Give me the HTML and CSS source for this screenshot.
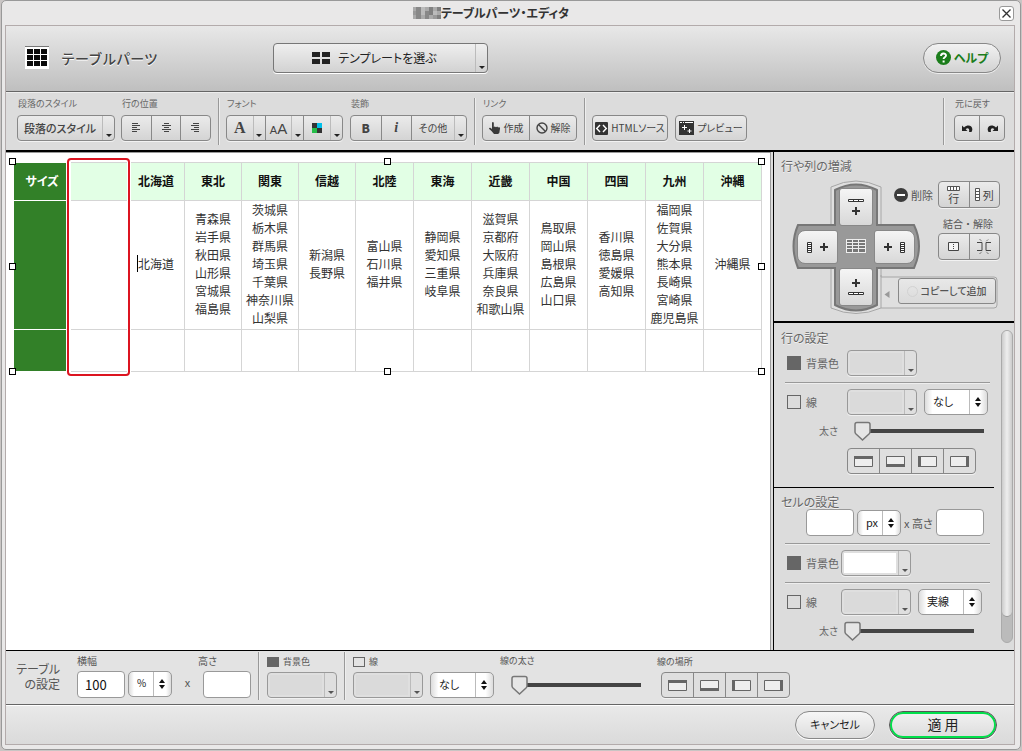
FILE: index.html
```html
<!DOCTYPE html>
<html lang="ja">
<head>
<meta charset="utf-8">
<title>テーブルパーツ・エディタ</title>
<link rel="stylesheet" href="styles.css">
</head>
<body>
<svg class="defs" aria-hidden="true">
  <defs>
    <symbol id="edge-top" viewBox="0 0 19 11"><path d="M.5.5h18v10H.5z" fill="#eee" stroke="#666"/><path d="M0 0h19v3H0z" fill="#666"/></symbol>
    <symbol id="edge-bottom" viewBox="0 0 19 11"><path d="M.5.5h18v10H.5z" fill="#eee" stroke="#666"/><path d="M0 8h19v3H0z" fill="#666"/></symbol>
    <symbol id="edge-left" viewBox="0 0 19 11"><path d="M.5.5h18v10H.5z" fill="#eee" stroke="#666"/><path d="M0 0h3v11H0z" fill="#666"/></symbol>
    <symbol id="edge-right" viewBox="0 0 19 11"><path d="M.5.5h18v10H.5z" fill="#eee" stroke="#666"/><path d="M16 0h3v11h-3z" fill="#666"/></symbol>
    <symbol id="plus" viewBox="0 0 8 8"><path d="M4 0v8M0 4h8" stroke="#333" stroke-width="2"/></symbol>
    <symbol id="strip-h" viewBox="0 0 16 3"><path d="M.5.5h15v2H.5zM5.5.5v2M10.500.5v2" fill="#fff" stroke="#333"/></symbol>
    <symbol id="strip-v" viewBox="0 0 5 11"><path d="M.5.5h4v10h-4zM.5 2.500h4M.5 4.500h4M.5 6.500h4M.5 8.500h4" fill="#fff" stroke="#333"/></symbol>
  </defs>
</svg>
<div class="window">
  <div class="titlebar">
    <svg class="mosaic" width="28" height="12" viewBox="0 0 28 12" aria-hidden="true">
      <path d="M0 0h28v12H0z" fill="#aaa"/><path d="M3 0h5v12H3zM12 4h4v8h-4z" fill="#888"/><path d="M8 0h4v8H8zM20 4h4v4h-4z" fill="#bbb"/><path d="M16 0h4v8h-4zM24 0h4v4h-4zM24 8h4v4h-4z" fill="#808080"/><path d="M0 4h3v4H0zM20 8h4v4h-4z" fill="#999"/>
    </svg>
    <h1>テーブルパーツ・エディタ</h1>
    <button class="close" aria-label="閉じる"><svg width="9" height="9" viewBox="0 0 9 9"><path d="M.5.5l8 8M8.500.5l-8 8" stroke="#333" stroke-width="1.300"/></svg></button>
  </div>
  <div class="panel">
    <header class="header">
      <div class="brand">
        <svg width="24" height="23" viewBox="0 0 24 23" aria-hidden="true"><path d="M0 0h24v23H0z" fill="#fff"/><path d="M0 .5h24" stroke="#777"/><path d="M2 3h6v5H2zM9 3h6v5H9zM16 3h6v5h-6zM2 9h6v5H2zM9 9h6v5H9zM16 9h6v5h-6zM2 15h6v5H2zM9 15h6v5H9zM16 15h6v5h-6z" fill="#0a0a0a"/></svg>
        <h2>テーブルパーツ</h2>
      </div>
      <button class="template">
        <span class="template-face"><svg width="18" height="12" viewBox="0 0 18 12" aria-hidden="true"><path d="M0 0h8v5H0zM10 0h8v5h-8zM0 7h8v5H0zM10 7h8v5h-8z" fill="#222"/></svg>テンプレートを選ぶ</span>
        <span class="caret"></span>
      </button>
      <button class="help"><svg width="15" height="15" viewBox="0 0 15 15" aria-hidden="true"><circle cx="7.500" cy="7.500" r="7.500" fill="#1b7d1b"/><path d="M5 6c0-3.400 5-3.300 5-.4 0 1.700-2.400 1.700-2.400 3.400" fill="none" stroke="#fff" stroke-width="1.900"/><path d="M6.600 10.500h2v2h-2z" fill="#fff"/></svg>ヘルプ</button>
    </header>

    <div class="toolbar">
      <div class="pair">
        <section><h3>段落のスタイル</h3>
          <div class="group style-group"><button class="t-style">段落のスタイル</button><button class="drop" aria-label="スタイル一覧"><span class="caret"></span></button></div>
        </section>
        <section><h3>行の位置</h3>
          <div class="group align-group">
            <button aria-label="左揃え"><svg width="9" height="10" viewBox="0 0 9 10"><path d="M0 .5h6M0 2.500h8M0 4.500h5M0 6.500h8M0 8.500h5" stroke="#444"/></svg></button>
            <button aria-label="中央揃え"><svg width="9" height="10" viewBox="0 0 9 10"><path d="M2 .5h5M0 2.500h9M2 4.500h5M0 6.500h9M2 8.500h5" stroke="#444"/></svg></button>
            <button aria-label="右揃え"><svg width="9" height="10" viewBox="0 0 9 10"><path d="M2 .5h6M0 2.500h8M3 4.500h5M0 6.500h8M3 8.500h5" stroke="#444"/></svg></button>
          </div>
        </section>
      </div>
      <i class="sep"></i>
      <section><h3>フォント</h3>
        <div class="group font-group">
          <button class="serif">A</button><button class="drop" aria-label="書体"><span class="caret"></span></button>
          <button class="sizes" aria-label="文字の大きさ"><span><small>A</small>A</span></button><button class="drop" aria-label="文字サイズ"><span class="caret"></span></button>
          <button aria-label="文字色"><svg width="10" height="10" viewBox="0 0 10 10"><path d="M0 0h5v5H0zM5 5h5v5H5z" fill="#333"/><path d="M5 0h5v5H5z" fill="#00bfea"/><path d="M0 5h5v5H0z" fill="#25bd48"/></svg></button><button class="drop" aria-label="色一覧"><span class="caret"></span></button>
        </div>
      </section>
      <section><h3>装飾</h3>
        <div class="group deco-group"><button class="bold">B</button><button class="italic">i</button><button class="other">その他</button><button class="drop" aria-label="装飾一覧"><span class="caret"></span></button></div>
      </section>
      <i class="sep"></i>
      <section><h3>リンク</h3>
        <div class="group link-group">
          <button><svg width="12" height="12" viewBox="0 0 12 12" aria-hidden="true"><path d="M3 1c0-1.200 1.800-1.200 1.800 0v4l1-.6 1.200.8 1.200-.6 1 .9c1.500-.5 2 .3 1.800 1.300L10.300 11l-1.300 1H5L2.500 9 .2 7C-.4 6.200.7 5.400 1.600 6L3 7z" fill="#3a3a3a"/></svg>作成</button>
          <button><svg width="12" height="12" viewBox="0 0 12 12" aria-hidden="true"><circle cx="6" cy="6" r="5" fill="none" stroke="#444" stroke-width="1.400"/><path d="M2.500 2.500l7 7" stroke="#444" stroke-width="1.400"/></svg>解除</button>
        </div>
      </section>
      <i class="sep"></i>
      <div class="group html-button"><button><svg width="13" height="13" viewBox="0 0 13 13" aria-hidden="true"><rect width="13" height="13" rx="1" fill="#333"/><path d="M5 3L1.700 6.500 5 10M8 3l3.300 3.500L8 10" fill="none" stroke="#fff" stroke-width="1.400"/></svg>HTMLソース</button></div>
      <div class="group preview-button"><button><svg width="15" height="14" viewBox="0 0 15 14" aria-hidden="true"><path d="M0 0h15v14H0z" fill="#333"/><path d="M1 1.500h2M4 1.500h1M6 1.500h8M5.500 4v5M3 6.500h5M10.500 8v4M8.500 10h4" stroke="#fff"/></svg>プレビュー</button></div>
      <i class="sep push"></i>
      <section class="undo"><h3>元に戻す</h3>
        <div class="group">
          <button aria-label="元に戻す"><svg width="11" height="9" viewBox="0 0 11 9"><path d="M0 1.500V7h5.500L3.700 5.300C5.500 3.200 8 4.500 7 8h2.500c3-5-2.500-9-7.500-4.600z" fill="#222"/></svg></button>
          <button aria-label="やり直す"><svg width="11" height="9" viewBox="0 0 11 9"><path d="M11 1.500V7H5.500l1.800-1.700C5.500 3.200 3 4.500 4 8H1.500c-3-5 2.500-9 7.500-4.600z" fill="#222"/></svg></button>
        </div>
      </section>
    </div>

    <main class="main">
      <div class="canvas">
        <div class="selection">
          <table>
            <colgroup><col class="narrow" span="6"><col span="7"></colgroup>
            <thead><tr><th class="side">サイズ</th><th></th><th>北海道</th><th>東北</th><th>関東</th><th>信越</th><th>北陸</th><th>東海</th><th>近畿</th><th>中国</th><th>四国</th><th>九州</th><th>沖縄</th></tr></thead>
            <tbody>
              <tr class="places"><th class="side"></th><td></td><td><span class="cursor">北海道</span></td><td>青森県<br>岩手県<br>秋田県<br>山形県<br>宮城県<br>福島県</td><td>茨城県<br>栃木県<br>群馬県<br>埼玉県<br>千葉県<br>神奈川県<br>山梨県</td><td>新潟県<br>長野県</td><td>富山県<br>石川県<br>福井県</td><td>静岡県<br>愛知県<br>三重県<br>岐阜県</td><td>滋賀県<br>京都府<br>大阪府<br>兵庫県<br>奈良県<br>和歌山県</td><td>鳥取県<br>岡山県<br>島根県<br>広島県<br>山口県</td><td>香川県<br>徳島県<br>愛媛県<br>高知県</td><td>福岡県<br>佐賀県<br>大分県<br>熊本県<br>長崎県<br>宮崎県<br>鹿児島県</td><td>沖縄県</td></tr>
              <tr class="blank"><th class="side"></th><td></td><td></td><td></td><td></td><td></td><td></td><td></td><td></td><td></td><td></td><td></td><td></td></tr>
            </tbody>
          </table>
          <div class="column-mark"></div>
          <i class="handle top left"></i><i class="handle top center"></i><i class="handle top right"></i>
          <i class="handle middle left"></i><i class="handle middle right"></i>
          <i class="handle bottom left"></i><i class="handle bottom center"></i><i class="handle bottom right"></i>
        </div>
      </div>

      <aside class="sidebar">
        <section class="adder">
          <h4>行や列の増減</h4>
          <div class="adder-body">
            <svg class="adder-art" width="210" height="136" viewBox="0 0 210 136" aria-hidden="true">
              <path d="M41 50V8q25-12 50 0v42M41 88v41q25 11 50 0V88M91 96v2h113q3 0 3 3v25q0 3-3 3H91" fill="#dfdfdf" stroke="#a6a6a6"/>
              <path d="M45 11q21-11 42 0v35h37q10 21 0 43H87v37q-21 11-42 0V89H8q-9-22 0-43h37z" fill="#999" stroke="#777" stroke-width="2"/>
              <path d="M99.500 112v7l-5-3.500z" fill="#999"/>
              <path d="M56 60h20v14H56z" fill="#eee"/>
              <path d="M57 61h5v2h-5zM63 61h5v2h-5zM69 61h6v2h-6zM57 64h5v2h-5zM63 64h5v2h-5zM69 64h6v2h-6zM57 67h5v2h-5zM63 67h5v2h-5zM69 67h6v2h-6zM57 70h5v3h-5zM63 70h5v3h-5zM69 70h6v3h-6z" fill="#777"/>
            </svg>
            <div class="cross">
              <button class="up" aria-label="上に行を追加"><svg width="16" height="3"><use href="#strip-h"/></svg><svg width="8" height="8"><use href="#plus"/></svg></button>
              <button class="before" aria-label="左に列を追加"><svg width="5" height="11"><use href="#strip-v"/></svg><svg width="8" height="8"><use href="#plus"/></svg></button>
              <button class="after" aria-label="右に列を追加"><svg width="8" height="8"><use href="#plus"/></svg><svg width="5" height="11"><use href="#strip-v"/></svg></button>
              <button class="down" aria-label="下に行を追加"><svg width="8" height="8"><use href="#plus"/></svg><svg width="16" height="3"><use href="#strip-h"/></svg></button>
            </div>
            <div class="cell-tools">
              <div class="remove"><svg width="14" height="14" viewBox="0 0 14 14" aria-hidden="true"><circle cx="7" cy="7" r="7" fill="#3c3c3c"/><path d="M3 7h8" stroke="#fff" stroke-width="2"/></svg><span>削除</span>
                <div class="group"><button class="stacked"><svg width="13" height="5" viewBox="0 0 13 5" aria-hidden="true"><path d="M.5.500h12v4H.5zM3.500.5v4M6.500.5v4M9.500.5v4" fill="#fff" stroke="#555"/></svg>行</button><button><svg width="5" height="13" viewBox="0 0 5 13" aria-hidden="true"><path d="M.5.5h4v12h-4zM.5 3.500h4M.5 6.500h4M.5 9.500h4" fill="#fff" stroke="#555"/></svg>列</button></div>
              </div>
              <h5>結合・解除</h5>
              <div class="group"><button aria-label="結合"><svg width="11" height="9" viewBox="0 0 11 9"><path d="M.5.5h10v8H.5z" fill="#f4f4f4" stroke="#444"/><path d="M5.500 2v1M5.500 4v1M5.500 6v1" stroke="#444"/></svg></button><button aria-label="結合を解除"><svg width="16" height="15" viewBox="0 0 16 15"><path d="M1 3.500h5v8H1M15 3.500h-5v8h5" fill="none" stroke="#444"/><path d="M3.500 0L6 2.500M12.500 0L10 2.500M3.500 15L6 12.500M12.500 15L10 12.500" stroke="#444" stroke-dasharray="1 1"/></svg></button></div>
              <button class="copy"><i></i>コピーして追加</button>
            </div>
          </div>
        </section>
        <div class="settings">
          <div class="settings-list">
            <section class="row-settings">
              <h4>行の設定</h4>
              <div class="field"><label class="check"><input type="checkbox" checked>背景色</label><button class="picker" aria-label="行の背景色"><i></i><span class="caret"></span></button></div>
              <div class="field ruled stroke"><label class="check"><input type="checkbox">線</label><button class="picker" aria-label="行の線の色"><i></i><span class="caret"></span></button><select aria-label="行の線種"><option>なし</option></select></div>
              <label class="field slide">太さ<input type="range" min="0" max="20" value="0"></label>
              <div class="group edges"><button aria-label="上"><svg width="19" height="11"><use href="#edge-top"/></svg></button><button aria-label="下"><svg width="19" height="11"><use href="#edge-bottom"/></svg></button><button aria-label="左"><svg width="19" height="11"><use href="#edge-left"/></svg></button><button aria-label="右"><svg width="19" height="11"><use href="#edge-right"/></svg></button></div>
            </section>
            <section class="cell-settings">
              <h4>セルの設定</h4>
              <div class="size"><input type="text" aria-label="セルの幅"><select class="unit" aria-label="単位"><option>px</option></select><label for="cell-height">x 高さ</label><input type="text" id="cell-height"></div>
              <div class="field ruled"><label class="check"><input type="checkbox" checked>背景色</label><button class="picker white" aria-label="セルの背景色"><i></i><span class="caret"></span></button></div>
              <div class="field ruled stroke"><label class="check"><input type="checkbox">線</label><button class="picker" aria-label="セルの線の色"><i></i><span class="caret"></span></button><select aria-label="セルの線種"><option>実線</option></select></div>
              <label class="field slide">太さ<input type="range" min="0" max="20" value="0"></label>
            </section>
          </div>
          <div class="scrollbar"><i></i></div>
        </div>
      </aside>
    </main>

    <div class="table-settings">
      <h4>テーブル<br>の設定</h4>
      <div class="stack"><label for="table-width">横幅</label><div class="line"><input type="text" id="table-width" value="100"><select class="unit percent" aria-label="幅の単位"><option>%</option></select></div></div>
      <span class="times">x</span>
      <div class="stack height"><label for="table-height">高さ</label><input type="text" id="table-height"></div>
      <i class="sep"></i>
      <div class="stack"><label class="check"><input type="checkbox" checked>背景色</label><button class="picker" aria-label="表の背景色"><i></i><span class="caret"></span></button></div>
      <i class="sep"></i>
      <div class="stack"><label class="check"><input type="checkbox">線</label><div class="line wide"><button class="picker" aria-label="表の線の色"><i></i><span class="caret"></span></button><select aria-label="表の線種"><option>なし</option></select></div></div>
      <div class="stack thickness"><label for="table-line">線の太さ</label><input type="range" id="table-line" min="0" max="20" value="0"></div>
      <div class="stack position"><h5>線の場所</h5><div class="group edges"><button aria-label="上"><svg width="19" height="11"><use href="#edge-top"/></svg></button><button aria-label="下"><svg width="19" height="11"><use href="#edge-bottom"/></svg></button><button aria-label="左"><svg width="19" height="11"><use href="#edge-left"/></svg></button><button aria-label="右"><svg width="19" height="11"><use href="#edge-right"/></svg></button></div></div>
    </div>
    <footer class="footer"><button class="cancel">キャンセル</button><button class="apply">適 用</button></footer>
  </div>
</div>
</body>
</html>
```
FILE: styles.css
```css
* { box-sizing: border-box; }
body {
  margin: 0;
  padding: 0 1px 1px;
  min-height: 100vh;
  display: flex;
  background: #c9c5c4;
  color: #555;
  font: 11px/16px "Noto Sans CJK JP", sans-serif;
  font-feature-settings: "palt";
}
h1, h2, h3, h4, h5 { margin: 0; font-weight: 400; }
button, input, select { font: inherit; color: inherit; font-feature-settings: inherit; margin: 0; }
button { padding: 0; border: 0; background: none; display: flex; align-items: center; justify-content: center; }
svg { display: block; flex: none; }
.defs { position: absolute; width: 0; height: 0; }

.window {
  flex: 1;
  display: flex;
  flex-direction: column;
  padding: 0 5px 4px 3px;
  border: 1px solid #999;
  border-radius: 5px;
  background: #e9e8e8;
}
.titlebar { display: flex; align-items: center; height: 24px; }
.mosaic { margin-left: auto; }
.titlebar h1 { margin-right: 22px; color: #333; font-size: 12px; font-weight: 700; }
.close { width: 15px; height: 15px; margin-left: auto; margin-right: 1px; border: 1px solid #999; border-radius: 3px; background: #fff; }

.panel { flex: 1; display: flex; flex-direction: column; border: 1px solid #b3abab; background: #dcdcdc; }
.header {
  display: flex;
  align-items: center;
  height: 66px;
  padding: 0 13px 2px 19px;
  border-bottom: 1px solid #666;
  background: linear-gradient(#e8e8e8, #bfbfbf);
}
.brand { display: flex; align-items: center; gap: 12px; width: 248px; }
.brand h2 { color: #444; font-size: 14px; font-weight: 500; font-feature-settings: normal; text-shadow: 0 1px #fff; }
.template {
  width: 215px;
  height: 30px;
  border: 1px solid #777;
  border-radius: 4px;
  background: linear-gradient(#efefef, #d2d2d2);
  box-shadow: 0 1px #fff;
  color: #222;
  font-size: 12px;
}
.template-face { flex: 1; display: flex; align-items: center; justify-content: center; gap: 8px; }
.caret { align-self: stretch; display: flex; align-items: flex-end; justify-content: center; width: 12px; padding-bottom: 3px; border-left: 1px solid #bbb; }
.caret::after { content: ""; border: 3px solid transparent; border-top-color: #222; border-bottom: 0; }
.help {
  gap: 3px;
  width: 78px;
  height: 30px;
  margin-left: auto;
  border: 1px solid #888;
  border-radius: 15px;
  background: linear-gradient(#f2f2f2, #d2d2d2);
  box-shadow: 0 1px #eee;
  color: #1b7d1b;
  font-size: 12px;
  font-weight: 700;
}

.toolbar { display: flex; align-items: flex-end; gap: 7px; height: 60px; padding: 0 9px 9px 11px; border-top: 1px solid #eee; border-bottom: 2px solid #000; }
.toolbar h3 { height: 19px; padding-left: 1px; color: #666; font-size: 9px; line-height: 16px; }
.sep { width: 1px; background: #999; box-shadow: 1px 0 #eee; }
.toolbar .sep { align-self: stretch; margin: 5px 0 -4px; }
.toolbar .push { margin-left: auto; }
.pair { display: flex; gap: 6px; }
.undo { margin-left: 3px; }
.undo .group { width: 51px; }
.group { display: flex; height: 26px; border: 1px solid #888; border-radius: 4px; background: linear-gradient(#ebebeb, #d4d4d4); box-shadow: 0 1px #f2f2f2; color: #444; font-size: 10px; }
.group button { flex: 1; gap: 3px; white-space: nowrap; }
.group button + button:not(.drop) { border-left: 1px solid #888; }
.group .drop { flex: none; width: 12px; }
.style-group { width: 98px; }
.group .t-style { font-size: 11px; font-weight: 500; }
.align-group { width: 90px; }
.font-group, .deco-group { width: 117px; }
.link-group { width: 95px; }
.html-button { width: 76px; }
.preview-button { width: 72px; }
.serif { font: 700 16px "Liberation Serif", serif; }
.sizes { font: 15px "Liberation Sans", sans-serif; }
.sizes small { font-size: 11px; }
.bold { font-weight: 900; font-size: 12px; }
.italic { font: italic 700 14px "Liberation Serif", serif; }
.group .other { flex: none; width: 43px; }

.main { flex: 1; display: flex; min-height: 0; border-bottom: 1px solid #000; }
.canvas { flex: 1; padding: 9px 8px 0 7px; border-top: 1px solid #999; border-right: 1px solid #999; background: #fff; }
.selection { position: relative; }
table { width: 100%; table-layout: fixed; border-collapse: collapse; color: #333; font-size: 12px; line-height: 18px; text-align: center; }
.narrow { width: 57px; }
th, td { padding: 0 0 2px; border: 1px solid #d5d5d5; }
thead th { height: 38px; background: #e2ffe5; color: #111; font-weight: 700; }
.places { height: 129px; }
.blank { height: 42px; }
table .side { background: #328028; border-color: #fff; color: #fff; }
.cursor { border-left: 1px solid #000; margin-left: -1px; }
.column-mark { position: absolute; left: 54px; top: -4px; bottom: -4px; width: 63px; border: 2px solid #dc1420; border-radius: 4px; box-shadow: 0 0 0 1px #fff, inset 0 0 0 1px #fff; }
.handle { position: absolute; width: 7px; height: 7px; border: 1px solid #000; background: #fff; }
.top { top: -4px; }
.middle { top: calc(50% - 4px); }
.bottom { bottom: -3px; }
.left { left: -4px; }
.center { left: calc(50% - 4px); }
.right { right: -3px; }

.sidebar { flex: none; display: flex; flex-direction: column; width: 243px; padding-left: 2px; }
.sidebar > * { border-left: 1px solid #000; }
.sidebar h4 { font-size: 12px; color: #666; text-shadow: 0 1px #f2f2f2; }
.adder { height: 171px; padding: 6px 14px 0 7px; border-bottom: 2px solid #000; }
.adder-body { position: relative; display: grid; height: 136px; margin: 5px 0 0 9px; }
.adder-body > * { grid-area: 1 / 1; }
.adder-art { position: absolute; left: 0; top: 0; }
.cross { position: relative; justify-self: start; align-self: start; display: grid; grid-template: 38px 42px 38px / 41px 36px 41px; margin: 9px 0 0 7px; }
.cross button { gap: 5px; border: 1px solid #888; border-radius: 3px; background: linear-gradient(#f5f5f5, #d8d8d8); }
.cross .before, .cross .after { grid-row: 2; gap: 8px; margin: 4px 0; }
.up, .down { grid-column: 2; flex-direction: column; margin: 0 1px; }
.up { grid-row: 1; }
.down { grid-row: 3; }
.cross .before { grid-column: 1; border-radius: 8px 3px 3px 8px; }
.cross .after { grid-column: 3; border-radius: 3px 8px 8px 3px; }
.cell-tools { position: relative; justify-self: end; align-self: start; display: flex; flex-direction: column; align-items: flex-end; pointer-events: none; }
.cell-tools button { pointer-events: auto; }
.cell-tools .group { width: 62px; height: 27px; font-size: 11px; line-height: 12px; }
.stacked { flex-direction: column; }
.cell-tools .group .stacked { gap: 1px; }
.remove { display: flex; align-items: center; gap: 3px; padding-top: 2px; }
.remove .group { margin-left: 2px; }
.cell-tools h5 { height: 25px; padding: 8px 7px 0 0; font-size: 10px; font-feature-settings: normal; }
.copy { gap: 2px; width: 98px; height: 26px; margin: 18px 4px 0 0; border: 1px solid #888; border-radius: 3px; background: linear-gradient(#e8e8e8, #dadada); color: #555; font-size: 10px; font-weight: 500; }
.copy i { width: 11px; height: 11px; border: 1px solid #d2d2d2; border-radius: 50%; }

.settings { flex: 1; display: flex; min-height: 0; overflow: hidden; }
.settings-list { flex: 1; margin-right: 7px; }
.row-settings { height: 165px; padding: 7px 4px 0 7px; border-bottom: 1px solid #000; }
.cell-settings { padding: 6px 4px 0 7px; }
.field { display: flex; align-items: center; gap: 7px; height: 36px; margin-left: 4px; padding-bottom: 3px; color: #666; }
.ruled { height: 39px; padding-bottom: 0; border-top: 1px solid #999; box-shadow: inset 0 1px #eee; }
.stroke { height: 37px; padding-top: 1px; }
.check { display: flex; align-items: center; gap: 5px; white-space: nowrap; }
.field .check { width: 55px; padding-left: 2px; font-size: 11px; }
.cell-settings .field .check { width: 49px; }
.check input { appearance: none; flex: none; width: 14px; height: 14px; border: 1px solid #666; background: transparent; }
.check input:checked { background: #666; }
.picker { flex: none; width: 70px; height: 26px; border: 1px solid #999; border-radius: 4px; background: #dfdfdf; box-shadow: 0 1px #f0f0f0; }
.picker i { flex: 1; height: 20px; margin: 0 2px; background: #dadada; }
.white i { background: #fff; }
.picker .caret::after { border-top-color: #555; }
select {
  appearance: none;
  width: 64px;
  height: 26px;
  padding: 0 0 2px 8px;
  border: 1px solid #999;
  border-radius: 5px;
  background: url("data:image/svg+xml,%3Csvg xmlns='http://www.w3.org/2000/svg' width='18' height='24'%3E%3Cpath d='M.5 0v24' stroke='%23bbb'/%3E%3Cpath d='M9 7l3 4H6zM9 17l3-4H6z' fill='%23111'/%3E%3C/svg%3E") right / 18px 24px no-repeat, linear-gradient(90deg, #dcdcdc, #fff 12%, #fff 88%, #dcdcdc);
  color: #222;
  font-size: 11px;
}
.unit { width: 44px; }
input[type="text"] { width: 48px; height: 27px; padding: 0 7px; border: 1px solid #999; border-radius: 4px; background: #fff; color: #111; font-size: 13px; }
input[type="range"] { appearance: none; width: 131px; height: 24px; background: linear-gradient(#444, #444) right / calc(100% - 8px) 4px no-repeat; }
input[type="range"]::-webkit-slider-thumb {
  appearance: none;
  width: 19px;
  height: 22px;
  background: url("data:image/svg+xml,%3Csvg xmlns='http://www.w3.org/2000/svg' width='19' height='22'%3E%3Cpath d='M4 2.500h11q2 0 2 2V12q0 1-1 2l-6.500 6L3 14q-1-1-1-2V4.500q0-2 2-2z' fill='%23e6e6e6' stroke='%23777' stroke-width='1.500'/%3E%3C/svg%3E");
}
.slide { gap: 15px; height: 24px; margin-left: 38px; padding: 0; font-size: 10px; }
.cell-settings .slide { gap: 5px; }
.edges { width: 129px; background: #dfdfdf; }
.row-settings .edges { margin: 5px 0 0 66px; }
.size { display: flex; align-items: center; height: 27px; gap: 3px; padding-left: 25px; margin: -1px 0 7px; font-size: 11px; }
.size input:last-child { margin-left: auto; margin-right: 6px; }
.scrollbar { width: 12px; margin: 7px 1px 7px 0; border: 1px solid #aaa; border-radius: 6px; background: #bbb; }
.scrollbar i { display: block; height: 92%; border-bottom: 1px solid #999; border-radius: 6px; background: linear-gradient(90deg, #ccc, #eee, #ccc); }

.table-settings { display: flex; align-items: flex-start; height: 54px; border-bottom: 1px solid #666; background: #e3e3e3; }
.table-settings h4 { width: 54px; padding-top: 10px; font-size: 12px; line-height: 15px; text-align: right; }
.stack > label, .stack > h5 { display: flex; align-items: center; height: 20px; font-size: 10px; }
.stack { margin-left: 9px; }
.table-settings > .stack:nth-child(2) { margin-left: 17px; }
.line { display: flex; gap: 3px; }
.wide { gap: 7px; }
.table-settings .check { gap: 4px; height: 21px; font-size: 9px; }
.table-settings .check input { width: 12px; height: 10px; }
.percent { font-size: 10px; }
.times { width: 31px; padding-top: 23px; text-align: center; }
.table-settings .height { margin-left: 0; }
.table-settings .height label { margin-left: -5px; }
.table-settings .sep { height: 48px; margin: 1px 0 0 7px; }
.table-settings .sep + .stack { margin-left: 8px; }
.table-settings .thickness { margin-left: 16px; }
.thickness label { margin-left: -10px; }
.stack.thickness > label, .stack.position > h5 { font-size: 9px; }
.thickness input { display: block; margin-top: 2px; }
.table-settings .position { margin-left: 20px; }
.stack.position > h5 { height: 21px; margin-left: -4px; }
.footer { display: flex; align-items: flex-start; justify-content: flex-end; gap: 14px; height: 39px; padding: 5px 17px 0; border-top: 1px solid #fff; background: linear-gradient(#e9e9e9, #dadada); color: #222; }
.footer button { height: 28px; padding-bottom: 2px; border-radius: 14px; }
.cancel { width: 80px; border: 1px solid #888; background: linear-gradient(#f6f6f6, #ddd); box-shadow: 0 1px #fff; }
.apply { width: 108px; border: 1px solid #555; background: linear-gradient(#f2f2f2, #dcdcdc); box-shadow: inset 0 0 0 2px #00e04a, 0 1px #fff; font-size: 14px; }
```
